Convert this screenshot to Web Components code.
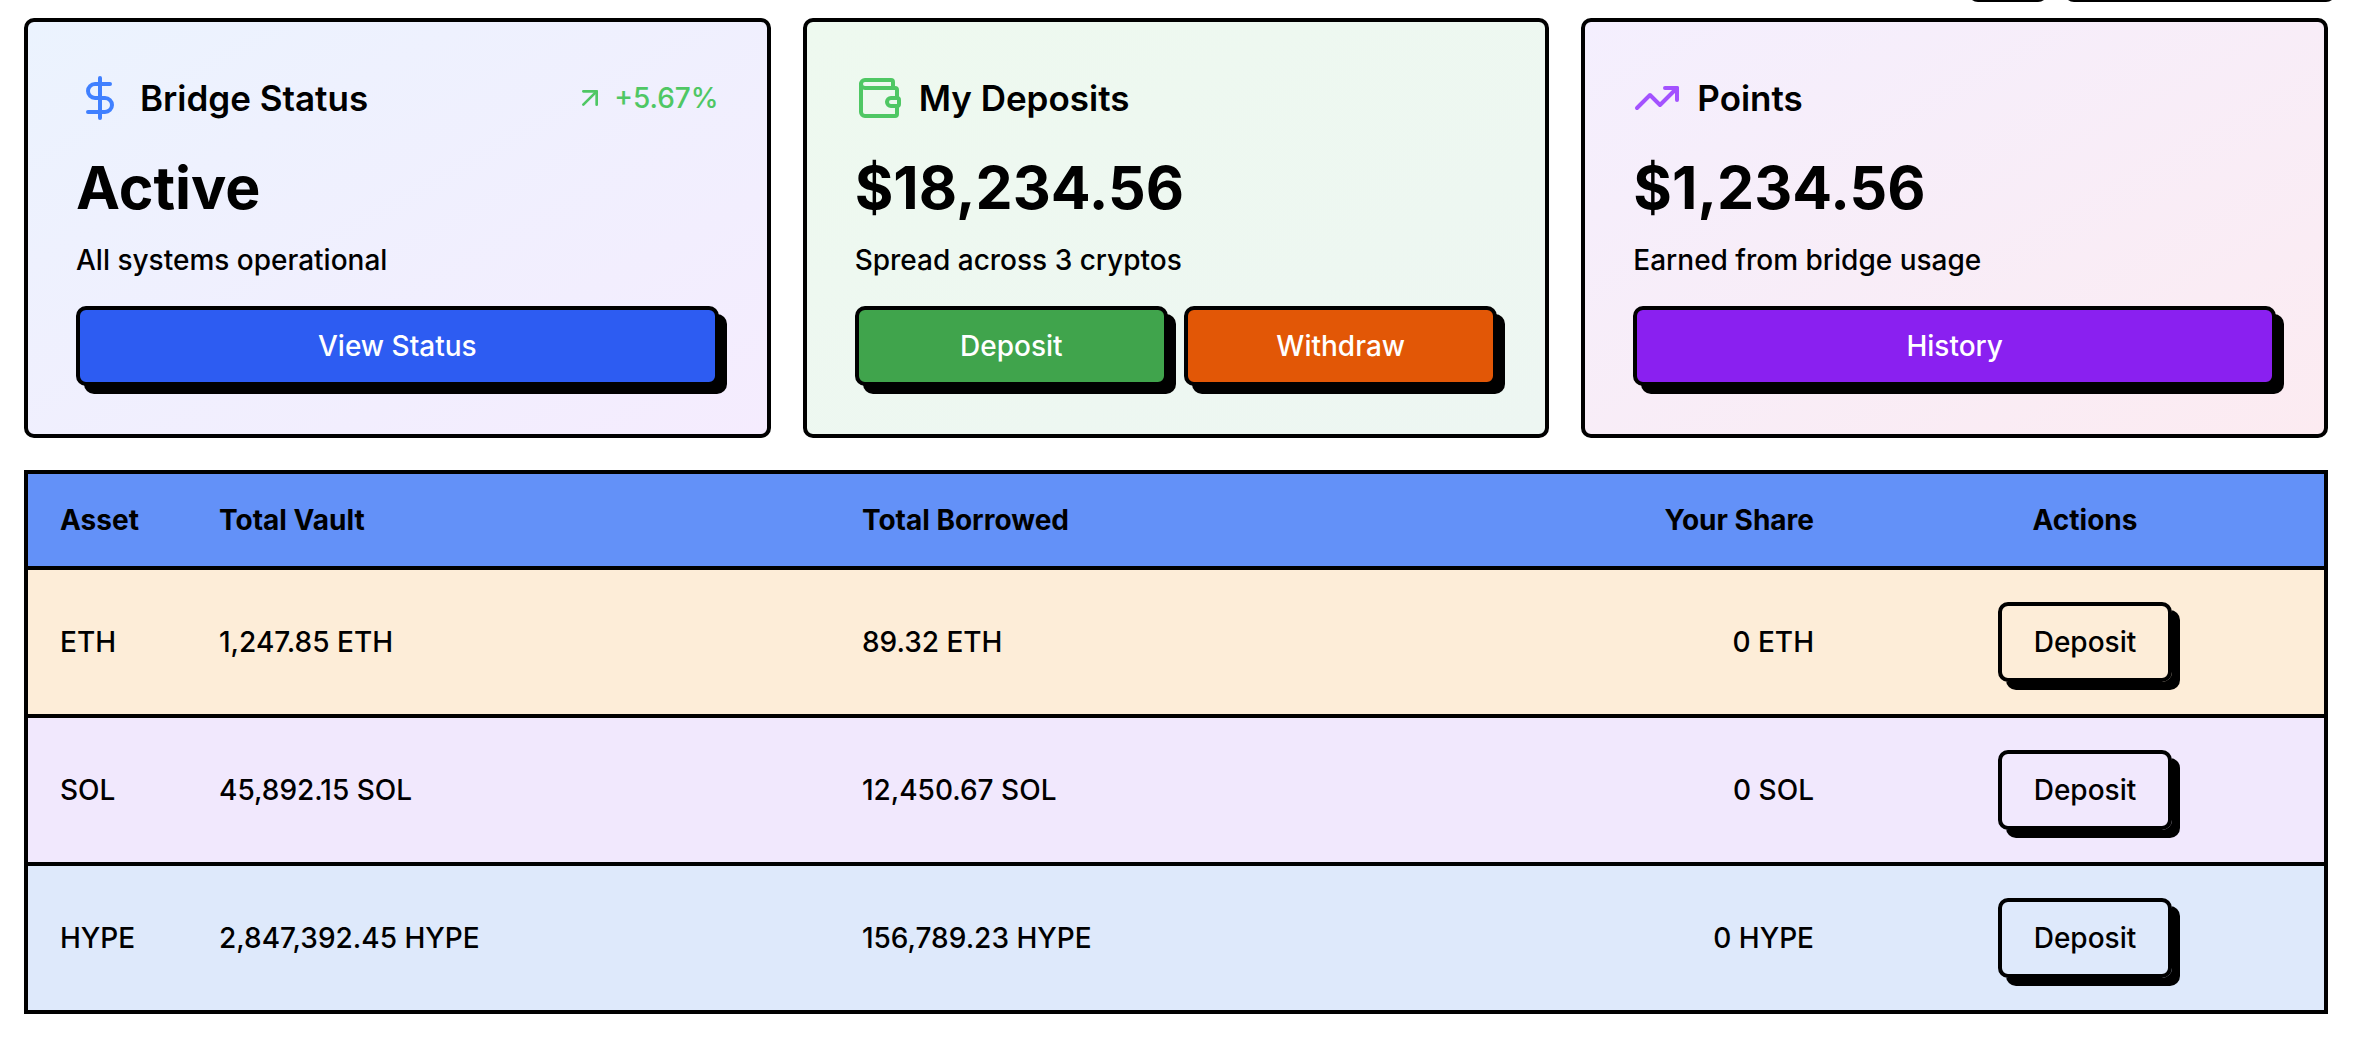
<!DOCTYPE html>
<html lang="en">
<head>
<meta charset="utf-8">
<title>Bridge dashboard</title>
<style>
  body { margin: 0; background: #fff; color: #000; font: 500 28px/44px Inter, "Liberation Sans", sans-serif; }
</style>
</head>
<body>
<bridge-dashboard></bridge-dashboard>

<script>
const define = (name, html, setup) => {
  const template = document.createElement("template");
  template.innerHTML = html;
  customElements.define(name, class extends HTMLElement {
    constructor() {
      super();
      this.attachShadow({ mode: "open" }).append(template.content.cloneNode(true));
    }
    connectedCallback() { if (setup) setup(this, this.shadowRoot); }
  });
};

const icons = {
  dollar: '<path d="M12 2v20"/><path d="M17 5H9.5a3.5 3.5 0 0 0 0 7h5a3.5 3.5 0 0 1 0 7H6"/>',
  wallet: '<path d="M19 7V4a1 1 0 0 0-1-1H5a2 2 0 0 0 0 4h15a1 1 0 0 1 1 1v4h-3a2 2 0 0 0 0 4h3a1 1 0 0 0 1-1v-2a1 1 0 0 0-1-1"/><path d="M3 5v14a2 2 0 0 0 2 2h15a1 1 0 0 0 1-1v-4"/>',
  trend: '<path d="M16 7h6v6"/><path d="m22 7-8.5 8.5-5-5L2 17"/>',
  arrow: '<path d="M7 7h10v10"/><path d="M7 17 17 7"/>'
};

define("line-icon", `
  <style>
    :host { display: block; flex: none; width: 48px; height: 48px; }
    svg { display: block; width: 100%; height: 100%; fill: none; stroke: currentColor;
          stroke-width: 2; stroke-linecap: round; stroke-linejoin: round; }
  </style>
  <svg viewBox="0 0 24 24" aria-hidden="true"></svg>`,
  (host, root) => { root.querySelector("svg").innerHTML = icons[host.getAttribute("name")] || ""; });

define("brutal-button", `
  <style>
    :host { display: inline-block; vertical-align: middle; }
    button { display: block; box-sizing: border-box; width: 100%; height: 80px; padding: 0 32px;
             border: 4px solid #000; border-radius: 10px; box-shadow: 8px 8px 0 #000;
             background: var(--fill, transparent); color: var(--ink, #000);
             font: inherit; cursor: pointer; }
  </style>
  <button type="button"><slot></slot></button>`);

define("stat-card", `
  <style>
    :host { display: flex; flex-direction: column; box-sizing: border-box; padding: 48px;
            border: 4px solid #000; border-radius: 10px;
            background: linear-gradient(to bottom right, var(--from), var(--to)); }
    header { display: flex; align-items: center; gap: 16px; margin-bottom: 24px; }
    line-icon { color: var(--accent); }
    h2 { flex: 1; margin: 0; font-size: 35px; line-height: 56px; font-weight: 600; }
    .value { font-size: 59px; line-height: 76px; font-weight: 700; }
    p { margin: 0; }
    .note { margin: 12px 0 24px; }
    .actions { display: flex; gap: 16px; }
    ::slotted(brutal-button) { flex: 1; --ink: #fff; }
  </style>
  <header><line-icon></line-icon><h2></h2><slot name="trend"></slot></header>
  <p class="value"></p>
  <p class="note"></p>
  <div class="actions"><slot></slot></div>`,
  (host, root) => {
    root.querySelector("h2").textContent = host.getAttribute("heading");
    root.querySelector(".value").textContent = host.getAttribute("value");
    root.querySelector(".note").textContent = host.getAttribute("note");
    const icon = document.createElement("line-icon");
    icon.setAttribute("name", host.getAttribute("icon"));
    root.querySelector("line-icon").replaceWith(icon);
  });

define("trend-badge", `
  <style>
    :host { display: flex; align-items: center; gap: 8px; color: #4fc764; }
    line-icon { width: 32px; height: 32px; }
  </style>
  <line-icon name="arrow"></line-icon><span><slot></slot></span>`);

define("vault-table", `
  <style>
    :host { display: block; }
    table { width: 100%; table-layout: fixed; border-collapse: separate; border-spacing: 0; border: 4px solid #000; }
    .asset { width: 159px; } .vault { width: 28%; } .borrowed { width: 24%; } .actions { width: 478px; }
    th, td { box-sizing: border-box; padding: 0 32px; text-align: left; white-space: nowrap; }
    th { height: 96px; font-weight: 700; background: #6391f8; border-bottom: 4px solid #000; }
    td { height: 148px; border-bottom: 4px solid #000; }
    tbody tr:last-child td { height: 144px; border-bottom: 0; }
    th:nth-child(4), td:nth-child(4) { text-align: right; }
    th:nth-child(5), td:nth-child(5) { text-align: center; }
    tbody tr:nth-child(1) { background: #fdedd8; }
    tbody tr:nth-child(2) { background: #f1e8fd; }
    tbody tr:nth-child(3) { background: #dee9fb; }
  </style>
  <table>
    <colgroup><col class="asset"><col class="vault"><col class="borrowed"><col><col class="actions"></colgroup>
    <thead><tr><th scope="col">Asset</th><th scope="col">Total Vault</th><th scope="col">Total Borrowed</th><th scope="col">Your Share</th><th scope="col">Actions</th></tr></thead>
    <tbody>
      <tr><td>ETH</td><td>1,247.85 ETH</td><td>89.32 ETH</td><td>0 ETH</td><td><brutal-button>Deposit</brutal-button></td></tr>
      <tr><td>SOL</td><td>45,892.15 SOL</td><td>12,450.67 SOL</td><td>0 SOL</td><td><brutal-button>Deposit</brutal-button></td></tr>
      <tr><td>HYPE</td><td>2,847,392.45 HYPE</td><td>156,789.23 HYPE</td><td>0 HYPE</td><td><brutal-button>Deposit</brutal-button></td></tr>
    </tbody>
  </table>`);

define("toolbar-edge", `
  <style>
    :host { display: flex; justify-content: flex-end; align-items: flex-end; gap: 16px;
            height: 2px; overflow: hidden; padding: 0 20px 0 24px; }
    span { flex: none; width: 80px; height: 80px; border-radius: 10px; background: #000; }
    .wide { width: 272px; }
  </style>
  <span></span><span class="wide"></span>`);

define("bridge-dashboard", `
  <style>
    :host { display: block; }
    main { display: flex; flex-direction: column; gap: 32px; padding: 16px 28px 32px 24px; }
    .cards { display: grid; grid-template-columns: repeat(3, minmax(0, 1fr)); gap: 32px; }
    .status { --from: #ebf3fe; --to: #f5ecfe; --accent: #4080ff; }
    .deposits { --from: #eef9ef; --to: #edf6f2; --accent: #4fc764; }
    .points { --from: #f4effe; --to: #fcebf1; --accent: #a352ff; }
    .blue { --fill: #2d5cf2; } .green { --fill: #40a44c; }
    .orange { --fill: #e25706; } .purple { --fill: #8a20f0; }
  </style>
  <toolbar-edge></toolbar-edge>
  <main>
    <section class="cards">
      <stat-card class="status" icon="dollar" heading="Bridge Status" value="Active" note="All systems operational">
        <trend-badge slot="trend">+5.67%</trend-badge>
        <brutal-button class="blue">View Status</brutal-button>
      </stat-card>
      <stat-card class="deposits" icon="wallet" heading="My Deposits" value="$18,234.56" note="Spread across 3 cryptos">
        <brutal-button class="green">Deposit</brutal-button>
        <brutal-button class="orange">Withdraw</brutal-button>
      </stat-card>
      <stat-card class="points" icon="trend" heading="Points" value="$1,234.56" note="Earned from bridge usage">
        <brutal-button class="purple">History</brutal-button>
      </stat-card>
    </section>
    <vault-table></vault-table>
  </main>`);
</script>
</body>
</html>
